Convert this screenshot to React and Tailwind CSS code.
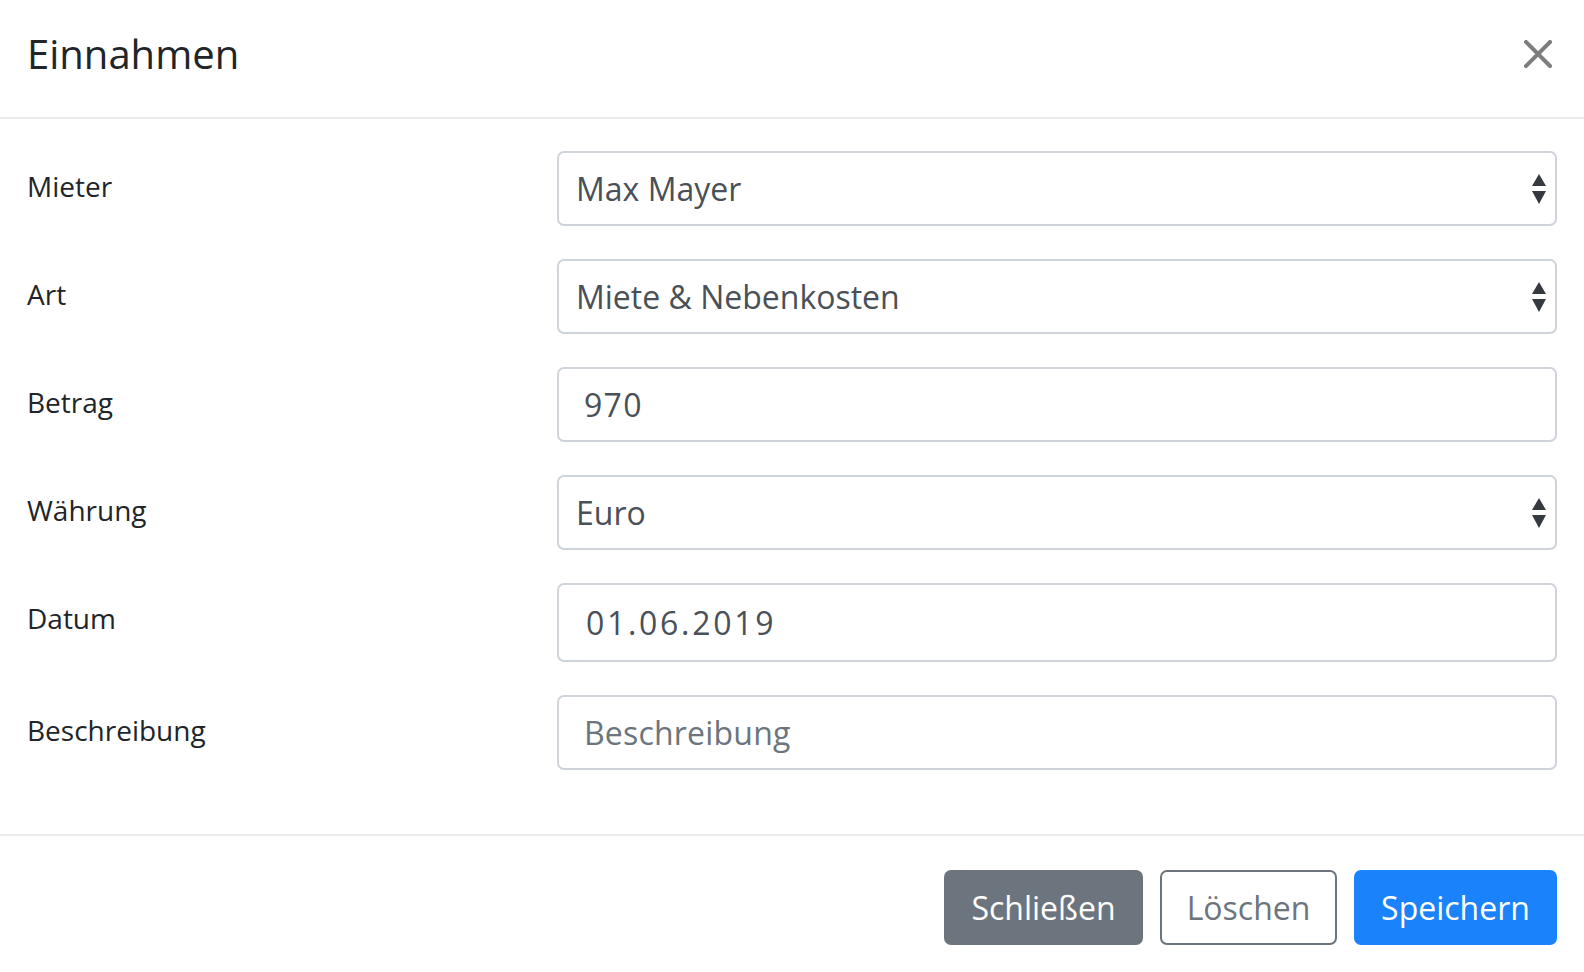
import React from 'react';

const font = { fontFamily: '"Open Sans", "DejaVu Sans", sans-serif' };

function SelectArrows() {
  return (
    <svg className="absolute right-[8px] top-1/2 -translate-y-1/2" width="16" height="32" viewBox="0 0 16 32">
      <path d="M8 1 L15 13 L1 13 Z" fill="#343a40" />
      <path d="M1 18 L15 18 L8 31 Z" fill="#343a40" />
    </svg>
  );
}

function Field({ label, children }) {
  return (
    <div className="grid grid-cols-[530px_1fr] items-start">
      <div className="flex h-[75px] items-center pb-[6px] text-[28px] text-[#212529]">{label}</div>
      {children}
    </div>
  );
}

function SelectBox({ value }) {
  return (
    <div className="relative flex h-[75px] items-center rounded-[7px] border-2 border-[#ced4da] bg-white pl-[17px] text-[32px] text-[#495057]">
      {value}
      <SelectArrows />
    </div>
  );
}

function InputBox({ value, placeholder, tall, tracking = 'tracking-[1.3px]' }) {
  return (
    <div
      className={`flex items-center rounded-[7px] border-2 border-[#ced4da] bg-white text-[32px] ${
        tall ? 'h-[79px] pl-[27px]' : 'h-[75px] pl-[25px]'
      } ${value ? 'text-[#495057] ' + tracking : 'text-[#6c757d] tracking-[0.2px]'}`}
    >
      {value || placeholder}
    </div>
  );
}

export default function App() {
  return (
    <div className="min-h-[972px] w-full bg-white" style={font}>
      {/* Header */}
      <div className="flex h-[119px] items-center justify-between border-b-2 border-[#e9ecef] px-[27px] pb-[10px]">
        <h5 className="text-[40px] leading-none text-[#212529]">Einnahmen</h5>
        <button className="mr-[5px] flex h-[32px] w-[28px] items-center justify-center">
          <svg width="28" height="28" viewBox="0 0 28 28">
            <path d="M2 2 L26 26 M26 2 L2 26" stroke="#7d7d7d" strokeWidth="4" strokeLinecap="square" />
          </svg>
        </button>
      </div>

      {/* Body */}
      <div className="flex flex-col gap-[33px] px-[27px] pt-[32px] pb-[64px]">
        <Field label="Mieter">
          <SelectBox value="Max Mayer" />
        </Field>
        <Field label="Art">
          <SelectBox value="Miete & Nebenkosten" />
        </Field>
        <Field label="Betrag">
          <InputBox value="970" />
        </Field>
        <Field label="Währung">
          <SelectBox value="Euro" />
        </Field>
        <Field label="Datum">
          <InputBox value="01.06.2019" tall tracking="tracking-[2.7px]" />
        </Field>
        <Field label="Beschreibung">
          <InputBox placeholder="Beschreibung" />
        </Field>
      </div>

      {/* Footer */}
      <div className="flex justify-end gap-[17px] border-t-2 border-[#e9ecef] px-[27px] pt-[34px] pb-[28px]">
        <button className="h-[75px] w-[199px] rounded-[7px] bg-[#6c757d] text-[32px] text-white">Schließen</button>
        <button className="h-[75px] w-[177px] rounded-[7px] border-2 border-[#6c757d] bg-white text-[32px] text-[#6c757d]">
          Löschen
        </button>
        <button className="h-[75px] w-[203px] rounded-[7px] bg-[#1a82fb] text-[32px] text-white">Speichern</button>
      </div>
    </div>
  );
}
